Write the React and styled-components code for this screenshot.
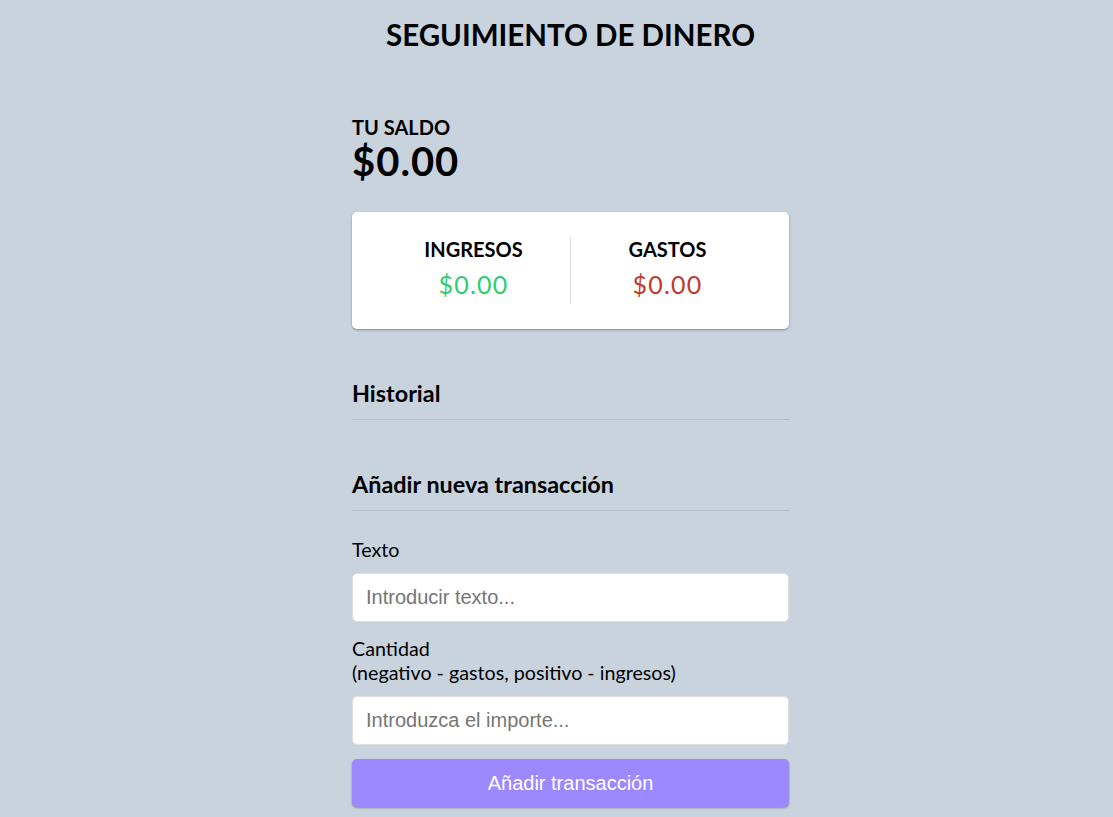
import React from "react";
import styled, { createGlobalStyle } from "styled-components";

const Global = createGlobalStyle`
  * { box-sizing: border-box; }
  body {
    margin: 0;
    padding-left: 28px;
    background: #c8d3de;
    font-family: Lato, "Open Sans", sans-serif;
    color: #000;
  }
`;

const Container = styled.div`
  width: 437px;
  margin: 0 auto;
`;

const Title = styled.h2`
  margin: 17px 0 0;
  font-size: 29.5px;
  font-weight: 700;
  line-height: 36px;
  text-align: center;
`;

const BalanceLabel = styled.h4`
  margin: 63px 0 0;
  font-size: 20px;
  font-weight: 700;
  line-height: 22px;
  text-transform: uppercase;
`;

const Balance = styled.h1`
  margin: 0;
  font-size: 40px;
  font-weight: 700;
  line-height: 46px;
  letter-spacing: 1px;
`;

const Card = styled.div`
  display: flex;
  margin-top: 28px;
  padding: 25px;
  background: #fff;
  border-radius: 5px;
  box-shadow: 0 1px 3px rgba(0, 0, 0, 0.12), 0 1px 2px rgba(0, 0, 0, 0.24);
`;

const Column = styled.div`
  flex: 1;
  text-align: center;
  border-right: ${(p) => (p.$divider ? "1px solid #dedede" : "none")};
`;

const ColTitle = styled.h4`
  margin: 0;
  font-size: 20px;
  font-weight: 700;
  line-height: 24px;
  text-transform: uppercase;
`;

const Money = styled.p`
  margin: 8px 0 5px;
  font-size: 25px;
  line-height: 30px;
  letter-spacing: 1.25px;
  color: ${(p) => (p.$plus ? "#2ecc71" : "#c0392b")};
`;

const Section = styled.h3`
  margin: 50px 0 0;
  padding-bottom: 12px;
  font-size: 23.4px;
  font-weight: 700;
  line-height: 28px;
  border-bottom: 1px solid #b4bcc6;
`;

const Form = styled.form`
  display: flex;
  flex-direction: column;
`;

const Label = styled.label`
  display: block;
  font-size: 19.7px;
  line-height: 24px;
  margin: ${(p) => p.$m};
`;

const Input = styled.input`
  display: block;
  width: 100%;
  height: 49px;
  padding: 0 13px;
  border: 1px solid #dedede;
  border-radius: 5px;
  background: #fff;
  font-family: "Liberation Sans", Arial, sans-serif;
  font-size: 20px;
  outline: none;
  &::placeholder { color: #757575; }
`;

const Button = styled.button`
  display: block;
  width: 100%;
  height: 48px;
  margin: 14px 0 30px;
  border: 0;
  border-radius: 5px;
  background: #9c88ff;
  color: #fff;
  font-family: "Liberation Sans", Arial, sans-serif;
  font-size: 20px;
  cursor: pointer;
  box-shadow: 0 1px 3px rgba(0, 0, 0, 0.12), 0 1px 2px rgba(0, 0, 0, 0.24);
`;

export default function App() {
  return (
    <>
      <Global />
      <Container>
        <Title>SEGUIMIENTO DE DINERO</Title>
        <BalanceLabel>Tu saldo</BalanceLabel>
        <Balance>$0.00</Balance>
        <Card>
          <Column $divider>
            <ColTitle>Ingresos</ColTitle>
            <Money $plus>$0.00</Money>
          </Column>
          <Column>
            <ColTitle>Gastos</ColTitle>
            <Money>$0.00</Money>
          </Column>
        </Card>
        <Section>Historial</Section>
        <Section>Añadir nueva transacción</Section>
        <Form onSubmit={(e) => e.preventDefault()}>
          <Label $m="27px 0 11px">Texto</Label>
          <Input type="text" placeholder="Introducir texto..." />
          <Label $m="15px 0 11px">
            Cantidad
            <br />
            (negativo - gastos, positivo - ingresos)
          </Label>
          <Input type="number" placeholder="Introduzca el importe..." />
          <Button type="submit">Añadir transacción</Button>
        </Form>
      </Container>
    </>
  );
}
